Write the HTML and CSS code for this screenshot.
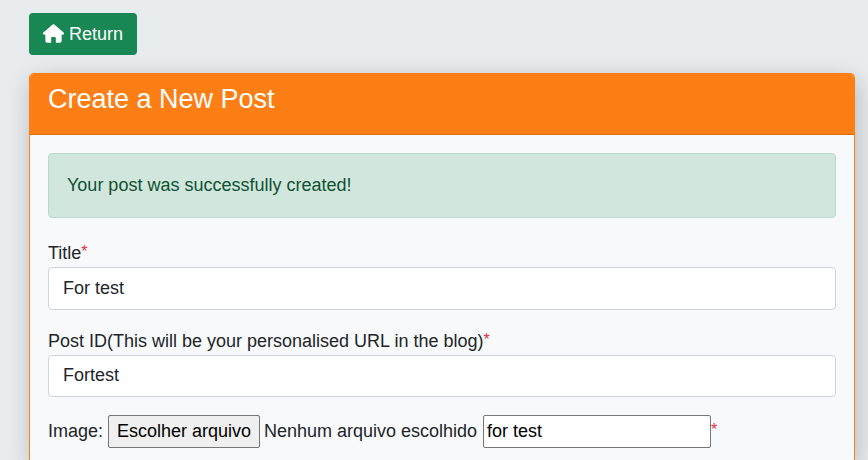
FILE: index.html
```html
<!DOCTYPE html>
<html lang="en">
<head>
<meta charset="utf-8">
<title>Create a New Post</title>
<link rel="stylesheet" href="styles.css">
</head>
<body>
<a class="btn-return">
<svg class="home" viewBox="0 0 576 512" aria-hidden="true"><path fill="currentColor" d="M575.800 255.500c0 18-15 32.100-32 32.100h-32l.7 160.200c0 35.300-28 64.200-64 64.200H376c-22.100 0-24-17.900-24-40v-88c0-17.700-14.300-32-32-32h-64c-17.700 0-32 14.300-32 32v88c0 22.100-1.900 40-24 40h-72c-36 0-64-28.900-64-64.200V287.600H32c-18 0-32-14-32-32.100 0-9 3-17 10-24L266.400 8c7-7 15-8 22-8s15 2 21 7l255.400 224.500c8 7 12 15 11 24z"/></svg>
<span>Return</span>
</a>
<main class="card">
<header class="card-header"><h1>Create a New Post</h1></header>
<form class="card-body">
<div class="alert">Your post was successfully created!</div>
<div class="field">
<label for="title">Title<span class="req">*</span></label>
<input class="control" id="title" type="text" value="For test">
</div>
<div class="field field-id">
<label for="post-id">Post ID(This will be your personalised URL in the blog)<span class="req">*</span></label>
<input class="control" id="post-id" type="text" value="Fortest">
</div>
<div class="image-row">
<span class="image-label">Image:</span>
<button class="file-button" type="button">Escolher arquivo</button>
<span class="file-name">Nenhum arquivo escolhido</span>
<input class="plain" type="text" value="for test"><span class="req">*</span>
</div>
</form>
</main>
</body>
</html>
```
FILE: styles.css
```css
* { box-sizing: border-box; }
html { background: #e9ecef; }
body {
  margin: 0;
  height: 460px;
  overflow: hidden;
  padding: 13px 13px 0 29px;
  background: #e9ecef;
  color: #212529;
  font: 18px/27px "Liberation Sans", Arial, sans-serif;
}
.btn-return {
  display: flex;
  align-items: center;
  width: 108px;
  height: 42px;
  padding-left: 14px;
  gap: 5px;
  border-radius: 4px;
  background: #198754;
  color: #fff;
}
.home { width: 21px; height: 19px; flex: none; margin-bottom: 2px; }
.card {
  margin-top: 18px;
  height: 387px;
  border: 1px solid #fd7e14;
  border-bottom: 0;
  border-radius: 5px 5px 0 0;
  background: #f8f9fa;
  box-shadow: 2px 7px 24px rgba(0, 0, 0, .22);
}
.card-header {
  height: 61px;
  padding: 8px 18px 0;
  border-bottom: 1px solid #dd6e12;
  border-radius: 4px 4px 0 0;
  background: #fd7e14;
  color: #fff;
}
h1 { margin: 0; font-size: 27px; font-weight: 400; line-height: 34px; }
.card-body { padding: 18px 18px 0; }
.alert {
  height: 65px;
  padding: 18px;
  border: 1px solid #badbcc;
  border-radius: 4px;
  background: #d1e7dd;
  color: #0f5132;
}
.field { margin-top: 22px; }
.field-id { margin-top: 18px; }
label { display: block; height: 27px; }
.req {
  position: relative;
  top: -2px;
  color: #e52f3a;
  font-size: 16px;
  line-height: 0;
}
.control {
  display: block;
  width: 100%;
  height: 43px;
  padding: 0 14px;
  border: 1px solid #ced4da;
  border-radius: 4px;
  background: #fff;
  color: #212529;
  font: inherit;
}
.field-id .control { height: 42px; padding-bottom: 2px; }
.image-row { display: flex; align-items: center; height: 33px; margin-top: 18px; }
.image-label { width: 60px; }
.file-button {
  width: 152px;
  height: 33px;
  padding: 0;
  border: 1px solid #767676;
  border-radius: 2px;
  background: #efefef;
  color: #000;
  font: inherit;
}
.file-name { width: 223px; padding-left: 4px; white-space: nowrap; }
.plain {
  width: 228px;
  height: 33px;
  padding: 0 3px;
  border: 1px solid #767676;
  border-radius: 2px;
  background: #fff;
  color: #000;
  font: inherit;
}
```
